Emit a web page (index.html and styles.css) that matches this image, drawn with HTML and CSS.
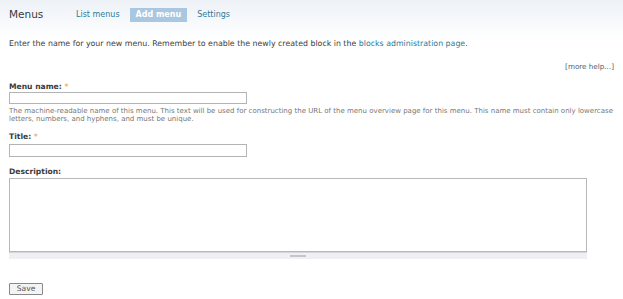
FILE: index.html
```html
<!DOCTYPE html>
<html>
<head>
<meta charset="utf-8">
<link rel="stylesheet" href="styles.css">
</head>
<body>
<div class="page">
  <div class="header">
    <h1 class="title">Menus</h1>
    <ul class="tabs">
      <li><a class="tab" href="#">List menus</a></li>
      <li><a class="tab active" href="#">Add menu</a></li>
      <li><a class="tab" href="#">Settings</a></li>
    </ul>
  </div>
  <p class="intro">Enter the name for your new menu. Remember to enable the newly created block in the <a href="#">blocks administration page</a>.</p>
  <div class="more-help"><a href="#">[more help...]</a></div>
  <form class="form">
    <div class="item item-name">
      <label class="label">Menu name: <span class="req">*</span></label>
      <input class="text" type="text">
      <div class="desc">The machine-readable name of this menu. This text will be used for constructing the URL of the menu overview page for this menu. This name must contain only lowercase letters, numbers, and hyphens, and must be unique.</div>
    </div>
    <div class="item item-title">
      <label class="label">Title: <span class="req">*</span></label>
      <input class="text text-title" type="text">
    </div>
    <div class="item item-desc">
      <label class="label">Description:</label>
      <div class="textarea-wrap">
        <textarea class="area"></textarea>
        <div class="grip"><span class="grip-handle"></span></div>
      </div>
    </div>
    <button class="save" type="button">Save</button>
  </form>
</div>
</body>
</html>
```
FILE: styles.css
```css
html, body {
  margin: 0;
  padding: 0;
}
body {
  background: linear-gradient(to bottom, #edf2f7 0px, #ffffff 40px);
  font-family: "DejaVu Sans", Verdana, sans-serif;
  color: #494949;
  height: 299px;
  overflow: hidden;
}
.page {
  padding: 0 9px;
}
a {
  color: #2d7b9c;
  text-decoration: none;
}
.header {
  display: flex;
  align-items: center;
  height: 30px;
}
.title {
  margin: 0;
  font-size: 10.5px;
  font-weight: normal;
  color: #3a3a3a;
  width: 67px;
  line-height: 14px;
  position: relative;
  top: -1px;
}
.tabs {
  display: flex;
  list-style: none;
  margin: 0;
  padding: 0;
  gap: 10px;
}
.tab {
  display: block;
  font-size: 8px;
  line-height: 14px;
  color: #2d7b9c;
}
.tab.active {
  background: #a9c7e0;
  color: #fff;
  font-weight: bold;
  padding: 0 6px;
}
.intro {
  margin: 9px 0 0;
  font-size: 7.85px;
  line-height: 10px;
  color: #3d3d3d;
}
.more-help {
  text-align: right;
  font-size: 7.2px;
  line-height: 8px;
  margin-top: 14px;
}
.more-help a {
  color: #555c6e;
}
.form {
  margin-top: 11px;
}
.item {
  display: flex;
  flex-direction: column;
  align-items: flex-start;
}
.label {
  font-size: 7.6px;
  font-weight: bold;
  line-height: 10px;
  color: #3a3a3a;
}
.req {
  color: #e8b060;
}
.text {
  box-sizing: border-box;
  width: 238px;
  height: 12px;
  margin: 0;
  border: 1px solid #b4b4b4;
  padding: 0;
  background: #fff;
}
.text-title {
  height: 13px;
  margin-top: 2px;
}
.desc {
  font-size: 7px;
  line-height: 8px;
  color: #777777;
  margin-top: 3px;
}
.item-title {
  margin-top: 9px;
}
.item-desc {
  margin-top: 10px;
}
.textarea-wrap {
  margin-top: 1px;
  width: 578px;
}
.area {
  display: block;
  box-sizing: border-box;
  width: 578px;
  height: 74px;
  border: 1px solid #b8b8b8;
  margin: 0;
  padding: 0;
  resize: none;
  background: #fff;
}
.grip {
  height: 6px;
  background: #eef0f3;
  border-top: 1px solid #d4d6da;
  display: flex;
  justify-content: center;
  align-items: center;
}
.grip-handle {
  display: block;
  width: 16px;
  height: 2px;
  background: #c4c6ca;
}
.save {
  display: block;
  margin-top: 24px;
  box-sizing: border-box;
  width: 34px;
  height: 12px;
  padding: 0;
  font-family: "DejaVu Sans", Verdana, sans-serif;
  font-size: 7.6px;
  line-height: 10px;
  color: #555;
  background: #f4f4f4;
  border: 1px solid #888;
  border-radius: 1px;
}
```
